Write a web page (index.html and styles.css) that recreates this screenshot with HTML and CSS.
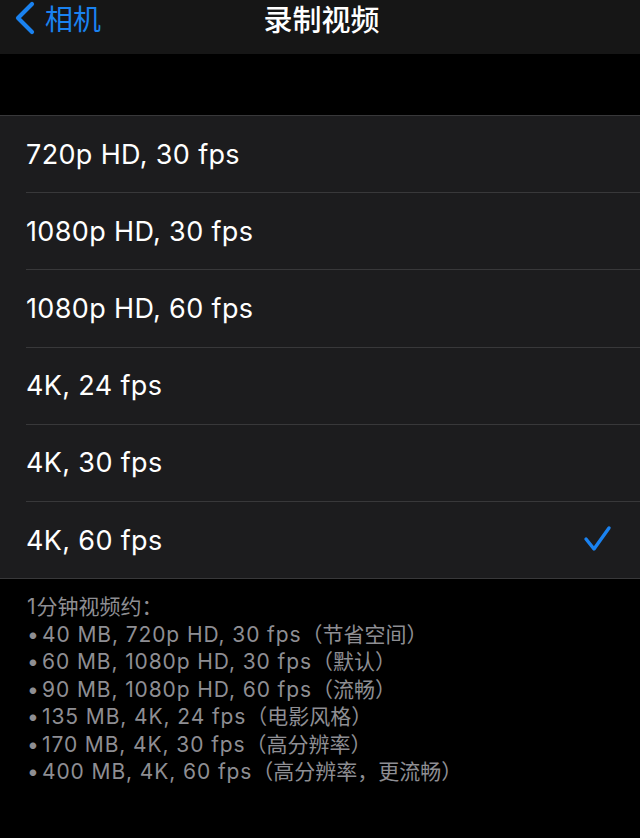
FILE: index.html
```html
<!DOCTYPE html>
<html lang="zh-CN">
<head>
<meta charset="utf-8">
<link rel="stylesheet" href="styles.css">
</head>
<body>
<div class="nav">
  <div class="back">
    <svg class="chev" width="24" height="34" viewBox="0 0 24 34"><path d="M19 3 L5 17 L19 31" fill="none" stroke="#1a82f0" stroke-width="4.2" stroke-linecap="round" stroke-linejoin="round"/></svg>
    <span class="back-text">相机</span>
  </div>
  <div class="title">录制视频</div>
</div>
<div class="gap"></div>
<div class="list">
  <div class="row"><span class="label">720p HD, 30 fps</span></div>
  <div class="row"><span class="label">1080p HD, 30 fps</span></div>
  <div class="row"><span class="label">1080p HD, 60 fps</span></div>
  <div class="row"><span class="label">4K, 24 fps</span></div>
  <div class="row"><span class="label">4K, 30 fps</span></div>
  <div class="row last"><span class="label">4K, 60 fps</span>
    <svg class="check" width="30" height="30" viewBox="0 0 30 30"><path d="M3 14 L11 24 L26 3" fill="none" stroke="#1a82f0" stroke-width="3.4" stroke-linecap="round" stroke-linejoin="round"/></svg>
  </div>
</div>
<div class="footer">
  <div class="fline">1<span class="cjk">分钟视频约：</span></div>
  <div class="fline"><span class="dot">•</span>40 MB, 720p HD, 30 fps<span class="cjk">（节省空间）</span></div>
  <div class="fline"><span class="dot">•</span>60 MB, 1080p HD, 30 fps<span class="cjk">（默认）</span></div>
  <div class="fline"><span class="dot">•</span>90 MB, 1080p HD, 60 fps<span class="cjk">（流畅）</span></div>
  <div class="fline"><span class="dot">•</span>135 MB, 4K, 24 fps<span class="cjk">（电影风格）</span></div>
  <div class="fline"><span class="dot">•</span>170 MB, 4K, 30 fps<span class="cjk">（高分辨率）</span></div>
  <div class="fline"><span class="dot">•</span>400 MB, 4K, 60 fps<span class="cjk">（高分辨率，更流畅）</span></div>
</div>
</body>
</html>
```
FILE: styles.css
```css
html, body {
  margin: 0;
  padding: 0;
  background: #000;
  width: 640px;
  height: 838px;
  overflow: hidden;
  font-family: "Inter", "Noto Sans CJK SC", sans-serif;
  text-spacing-trim: space-all;
}
.nav {
  height: 54px;
  background: #161616;
  position: relative;
  display: flex;
  justify-content: center;
  align-items: flex-start;
}
.back {
  position: absolute;
  left: 13px;
  top: 1px;
  height: 34px;
  display: flex;
  align-items: center;
  gap: 8px;
}
.back-text {
  color: #1a82f0;
  font-size: 28px;
  line-height: 34px;
  font-family: "Noto Sans CJK SC", sans-serif;
}
.title {
  color: #fff;
  font-size: 29px;
  line-height: 36px;
  margin-left: 3px;
  font-family: "Noto Sans CJK SC", sans-serif;
  font-weight: 500;
}
.gap {
  height: 61px;
}
.list {
  background: #1c1c1e;
  border-top: 1px solid #38383a;
  border-bottom: 1px solid #38383a;
}
.row {
  box-sizing: border-box;
  height: 77.2px;
  margin-left: 26px;
  padding-right: 27px;
  display: flex;
  align-items: center;
  justify-content: space-between;
  border-bottom: 1px solid #38383a;
}
.row.last {
  border-bottom: none;
  height: 76.2px;
}
.label {
  color: #fff;
  font-size: 27px;
  letter-spacing: 0.35px;
}
.check {
  display: block;
}
.footer {
  padding: 14px 0 0 27px;
  color: #8e8e93;
  font-size: 21px;
  line-height: 27.5px;
  letter-spacing: 0.9px;
}
.cjk {
  font-size: 21px;
  letter-spacing: 0;
  line-height: 1;
  font-family: "Noto Sans CJK SC", sans-serif;
}
.fline {
  white-space: nowrap;
  height: 27.5px;
}
.dot {
  display: inline-block;
  width: 15px;
  letter-spacing: 0;
}
```
